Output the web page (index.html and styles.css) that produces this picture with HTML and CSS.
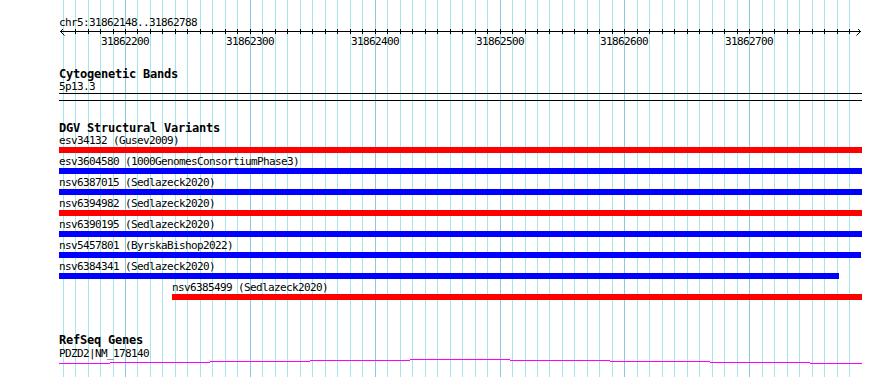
FILE: index.html
```html
<!DOCTYPE html>
<html lang="en">
<head>
  <meta charset="UTF-8" />
  <title>chr5:31862148..31862788</title>
  <link rel="stylesheet" href="styles.css">
</head>
<body>
  <div class="panel">
    <!-- 10bp grid, major line every 100bp -->
    <svg class="grid" width="890" height="377" viewBox="0 0 890 377">
      <path class="grid-minor" d="M63.5 0V377M75.5 0V377M88.5 0V377M100.5 0V377M113.5 0V377M137.5 0V377M150.5 0V377M162.5 0V377M175.5 0V377M187.5 0V377M200.5 0V377M212.5 0V377M225.5 0V377M237.5 0V377M262.5 0V377M275.5 0V377M287.5 0V377M300.5 0V377M312.5 0V377M325.5 0V377M337.5 0V377M350.5 0V377M362.5 0V377M387.5 0V377M400.5 0V377M412.5 0V377M425.5 0V377M437.5 0V377M450.5 0V377M462.5 0V377M475.5 0V377M487.5 0V377M512.5 0V377M525.5 0V377M537.5 0V377M549.5 0V377M562.5 0V377M574.5 0V377M587.5 0V377M599.5 0V377M612.5 0V377M637.5 0V377M649.5 0V377M662.5 0V377M674.5 0V377M687.5 0V377M699.5 0V377M712.5 0V377M724.5 0V377M737.5 0V377M762.5 0V377M774.5 0V377M787.5 0V377M799.5 0V377M812.5 0V377M824.5 0V377M837.5 0V377M849.5 0V377"/>
      <path class="grid-major" d="M125.5 0V377M250.5 0V377M375.5 0V377M500.5 0V377M624.5 0V377M749.5 0V377"/>
    </svg>

    <div class="tracks">
      <section class="ruler">
        <div class="label">chr5:31862148..31862788</div>
        <svg class="scale" width="803" height="18" viewBox="59 29 803 18">
          <path class="axis" d="M60 31.5H861"/>
          <path class="ticks" d="M75.5 29V34M88.5 29V34M100.5 29V34M113.5 29V34M125.5 29V34M137.5 29V34M150.5 29V34M162.5 29V34M175.5 29V34M187.5 29V34M200.5 29V34M212.5 29V34M225.5 29V34M237.5 29V34M250.5 29V34M262.5 29V34M275.5 29V34M287.5 29V34M300.5 29V34M312.5 29V34M325.5 29V34M337.5 29V34M350.5 29V34M362.5 29V34M375.5 29V34M387.5 29V34M400.5 29V34M412.5 29V34M425.5 29V34M437.5 29V34M450.5 29V34M462.5 29V34M475.5 29V34M487.5 29V34M500.5 29V34M512.5 29V34M525.5 29V34M537.5 29V34M549.5 29V34M562.5 29V34M574.5 29V34M587.5 29V34M599.5 29V34M612.5 29V34M624.5 29V34M637.5 29V34M649.5 29V34M662.5 29V34M674.5 29V34M687.5 29V34M699.5 29V34M712.5 29V34M724.5 29V34M737.5 29V34M749.5 29V34M762.5 29V34M774.5 29V34M787.5 29V34M799.5 29V34M812.5 29V34M824.5 29V34M837.5 29V34M849.5 29V34"/>
          <path class="arrow" d="M64.5 27.5L60.5 31.5L64.5 35.5M856.5 27.5L860.5 31.5L856.5 35.5"/>
          <text x="125" y="45">31862200</text>
          <text x="250" y="45">31862300</text>
          <text x="375" y="45">31862400</text>
          <text x="500" y="45">31862500</text>
          <text x="624" y="45">31862600</text>
          <text x="749" y="45">31862700</text>
        </svg>
      </section>

      <section class="track">
        <h2 class="track-title">Cytogenetic Bands</h2>
        <div class="label">5p13.3</div>
        <div class="band"></div>
      </section>

      <section class="track">
        <h2 class="track-title">DGV Structural Variants</h2>
        <div class="variant">
          <div class="label">esv34132 (Gusev2009)</div>
          <div class="bar bar-red" style="width: 803px;"></div>
        </div>
        <div class="variant">
          <div class="label">esv3604580 (1000GenomesConsortiumPhase3)</div>
          <div class="bar bar-blue" style="width: 803px;"></div>
        </div>
        <div class="variant">
          <div class="label">nsv6387015 (Sedlazeck2020)</div>
          <div class="bar bar-blue" style="width: 803px;"></div>
        </div>
        <div class="variant">
          <div class="label">nsv6394982 (Sedlazeck2020)</div>
          <div class="bar bar-red" style="width: 803px;"></div>
        </div>
        <div class="variant">
          <div class="label">nsv6390195 (Sedlazeck2020)</div>
          <div class="bar bar-blue" style="width: 803px;"></div>
        </div>
        <div class="variant">
          <div class="label">nsv5457801 (ByrskaBishop2022)</div>
          <div class="bar bar-blue" style="width: 802px;"></div>
        </div>
        <div class="variant">
          <div class="label">nsv6384341 (Sedlazeck2020)</div>
          <div class="bar bar-blue" style="width: 780px;"></div>
        </div>
        <div class="variant" style="margin-left: 113px;">
          <div class="label">nsv6385499 (Sedlazeck2020)</div>
          <div class="bar bar-red" style="width: 690px;"></div>
        </div>
      </section>

      <section class="track refseq">
        <h2 class="track-title">RefSeq Genes</h2>
        <div class="label gene-name">PDZD2|NM_178140</div>
        <svg class="gene" width="803" height="5" viewBox="59 362 803 5">
          <path d="M59 366.5H110M110 365.5H210M210 364.5H310M310 363.5H410M410 362.5H510M510 363.5H610M610 364.5H710M710 365.5H810M810 366.5H862"/>
        </svg>
      </section>
    </div>
  </div>
</body>
</html>
```

FILE: styles.css
```css
body {
  margin: 0;
  background-color: #ffffff;
  font-family: "DejaVu Sans Mono", "Liberation Mono", monospace;
  color: #000000;
}

.panel {
  position: relative;
  width: 890px;
  height: 377px;
  overflow: hidden;
}

.grid {
  position: absolute;
  top: 0;
  left: 0;
}

.grid path {
  fill: none;
  stroke-width: 1;
  shape-rendering: crispEdges;
}

.grid-minor {
  stroke: #a6e6ea;
}

.grid-major {
  stroke: #8cc8e2;
}

.tracks {
  position: relative;
  width: 803px;
  padding: 17px 0 0 59px;
}

.label {
  font-size: 11px;
  letter-spacing: -0.62px;
  line-height: 12px;
  white-space: nowrap;
}

.track {
  margin-top: 21px;
}

.track-title {
  margin: 0;
  font-size: 12px;
  font-weight: bold;
  letter-spacing: -0.22px;
  line-height: 13px;
  white-space: nowrap;
}

.scale {
  display: block;
}

.scale path {
  fill: none;
  stroke: #000000;
  stroke-width: 1;
}

.scale .axis,
.scale .ticks {
  shape-rendering: crispEdges;
}

.scale text {
  font-family: "DejaVu Sans Mono", "Liberation Mono", monospace;
  font-size: 11px;
  letter-spacing: -0.62px;
  text-anchor: middle;
  fill: #000000;
}

.band {
  height: 8px;
  box-sizing: border-box;
  border-top: 1px solid #000000;
  border-bottom: 1px solid #000000;
}

.variant {
  margin-bottom: 3px;
}

.bar {
  height: 6px;
}

.bar-red {
  background-color: #ff0000;
}

.bar-blue {
  background-color: #0000ff;
}

.refseq {
  margin-top: 34px;
}

.gene-name {
  margin-top: 2px;
  line-height: 10px;
}

.gene {
  display: block;
}

.gene path {
  fill: none;
  stroke: #ff00ff;
  stroke-width: 1;
  shape-rendering: crispEdges;
}
```
